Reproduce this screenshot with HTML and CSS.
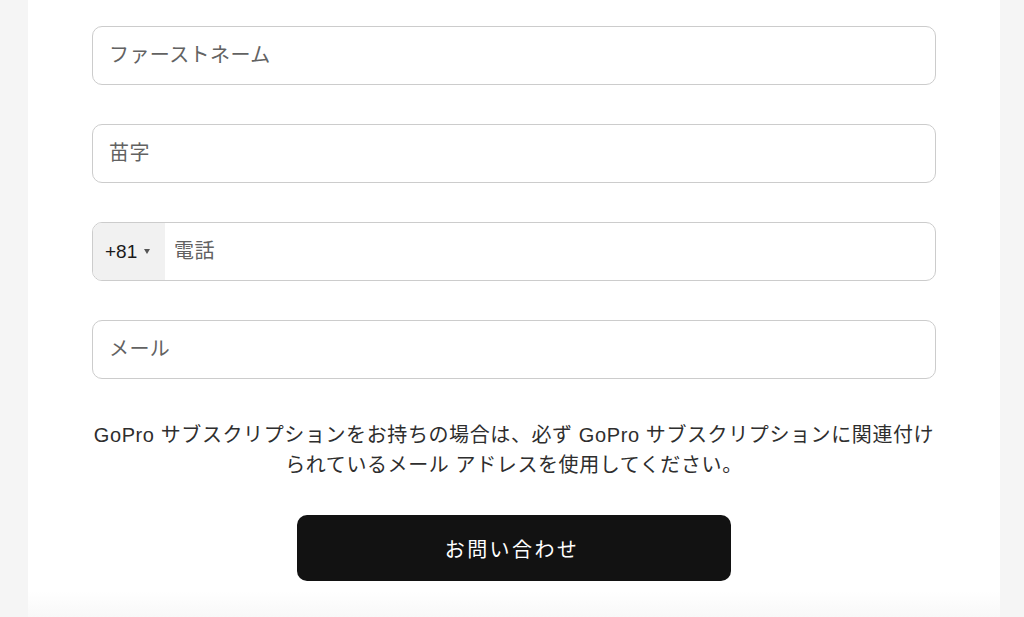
FILE: index.html
```html
<!DOCTYPE html>
<html lang="ja">
  <head>
    <meta charset="UTF-8" />
    <meta name="viewport" content="width=device-width, initial-scale=1.0" />
    <title>お問い合わせ</title>
    <link rel="stylesheet" href="styles.css">
  </head>
  <body>
    <div class="panel">
      <form class="contact-form">
        <div class="field">
          <input type="text" placeholder="ファーストネーム" />
        </div>
        <div class="field">
          <input type="text" placeholder="苗字" />
        </div>
        <div class="field phone">
          <div class="country">
            <span class="code">+81</span>
            <span class="caret"></span>
          </div>
          <input type="tel" placeholder="電話" />
        </div>
        <div class="field">
          <input type="email" placeholder="メール" />
        </div>
        <p class="note">
          GoPro サブスクリプションをお持ちの場合は、必ず GoPro サブスクリプションに関連付け<br />られているメール アドレスを使用してください。
        </p>
        <button type="button" class="submit">お問い合わせ</button>
      </form>
      <div class="fade"></div>
    </div>
  </body>
</html>
```

FILE: styles.css
```css
body {
  margin: 0;
  padding: 0;
  background: #f5f5f5;
  font-family: "Liberation Sans", "Noto Sans CJK JP", sans-serif;
  color: #333;
}
.panel {
  margin: 0 24px 0 28px;
  background: #fff;
  padding: 26px 64px 0;
  height: 617px;
  box-sizing: border-box;
  display: flex;
  flex-direction: column;
}
.contact-form {
  display: flex;
  flex-direction: column;
  gap: 39px;
}
.field {
  height: 59px;
  box-sizing: border-box;
  border: 1px solid #cccccc;
  border-radius: 10px;
  display: flex;
  overflow: hidden;
  background: #fff;
}
.field input {
  flex: 1;
  border: none;
  outline: none;
  background: transparent;
  padding: 0 0 0 16px;
  font-family: "Liberation Sans", "Noto Sans CJK JP", sans-serif;
  font-size: 20px;
  letter-spacing: 0.4px;
  color: #222;
}
.field input::placeholder {
  color: #626262;
}
.phone input {
  padding-left: 9px;
}
.country {
  width: 72px;
  background: #f1f1f1;
  display: flex;
  align-items: center;
  padding-left: 12px;
  box-sizing: border-box;
  gap: 7px;
}
.code {
  font-size: 19px;
  color: #1a1a1a;
}
.caret {
  width: 0;
  height: 0;
  border-left: 3.5px solid transparent;
  border-right: 3.5px solid transparent;
  border-top: 5px solid #555;
}
.note {
  margin: 2px -2px 0;
  text-align: center;
  font-size: 20px;
  line-height: 30px;
  letter-spacing: 0.6px;
  color: #2e2e2e;
}
.submit {
  align-self: center;
  width: 434px;
  height: 66px;
  margin-top: -4px;
  border: none;
  border-radius: 10px;
  background: #121212;
  color: #fff;
  font-family: "Liberation Sans", "Noto Sans CJK JP", sans-serif;
  font-size: 20px;
  letter-spacing: 2.4px;
  padding-left: 2px;
  cursor: pointer;
}
.fade {
  margin: auto -64px 0;
  height: 26px;
  background: linear-gradient(#fff, #f8f8f8);
}
```
